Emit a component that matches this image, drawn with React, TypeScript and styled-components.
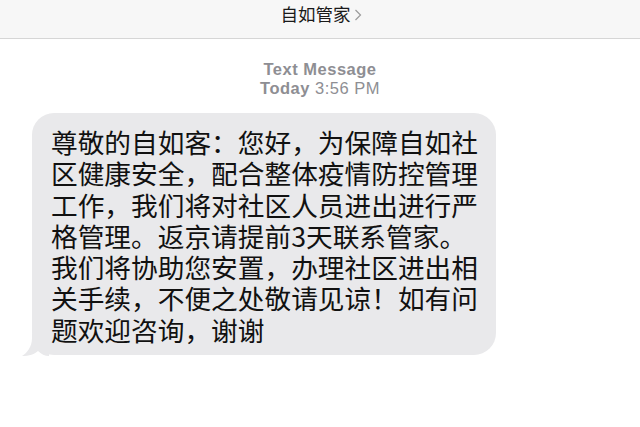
import React from "react";
import styled, { createGlobalStyle } from "styled-components";

const Global = createGlobalStyle`
  html, body { margin: 0; padding: 0; background: #ffffff; }
  body { width: 640px; height: 427px; overflow: hidden; }
`;

const Page = styled.div`
  width: 640px;
  height: 427px;
  display: flex;
  flex-direction: column;
  background: #ffffff;
  font-family: "Liberation Sans", "Noto Sans CJK SC", sans-serif;
`;

const NavBar = styled.header`
  height: 38px;
  background: #f7f7f7;
  border-bottom: 1px solid #d6d6d6;
  display: flex;
  align-items: center;
  justify-content: center;
  gap: 3px;
  box-sizing: content-box;
  padding-left: 2px;
`;

const Title = styled.span`
  font-family: "Noto Sans CJK SC", sans-serif;
  font-size: 17.5px;
  line-height: 20px;
  color: #1a1a1a;
  margin-top: -10px;
`;

const Chevron = styled.svg`
  width: 8px;
  height: 12px;
  margin-top: -8px;
`;

const Meta = styled.div`
  padding-top: 21px;
  display: flex;
  flex-direction: column;
  align-items: center;
  color: #8e8e93;
  font-size: 16.5px;
  line-height: 19px;
  letter-spacing: 0.5px;
`;

const MetaStrong = styled.span<{ $light?: boolean }>`
  font-weight: ${(p) => (p.$light ? 400 : 700)};
`;

const Thread = styled.div`
  padding: 15px 0 0 32px;
  display: flex;
  flex-direction: column;
  align-items: flex-start;
`;

const Bubble = styled.div`
  position: relative;
  background: #e9e9eb;
  border-radius: 22px;
  padding: 13px 18px 10px 19px;
  color: #111111;
  font-family: "Noto Sans CJK SC", sans-serif;
  font-size: 26.7px;
  line-height: 31.3px;
`;

const Line = styled.div`
  white-space: nowrap;
`;

const Tail = styled.svg`
  position: absolute;
  left: -11px;
  bottom: -1px;
  width: 30px;
  height: 22px;
`;

const lines = [
  "尊敬的自如客：您好，为保障自如社",
  "区健康安全，配合整体疫情防控管理",
  "工作，我们将对社区人员进出进行严",
  "格管理。返京请提前3天联系管家。",
  "我们将协助您安置，办理社区进出相",
  "关手续，不便之处敬请见谅！如有问",
  "题欢迎咨询，谢谢",
];

export default function App() {
  return (
    <>
      <Global />
      <Page>
        <NavBar>
          <Title>自如管家</Title>
          <Chevron viewBox="0 0 8 12">
            <path d="M1.5 1 L6.5 6 L1.5 11" fill="none" stroke="#9b9b9b" strokeWidth="1.2" />
          </Chevron>
        </NavBar>
        <Meta>
          <MetaStrong>Text Message</MetaStrong>
          <span>
            <MetaStrong>Today</MetaStrong> <MetaStrong $light>3:56 PM</MetaStrong>
          </span>
        </Meta>
        <Thread>
          <Bubble>
            <Tail viewBox="0 0 30 22">
              <path
                d="M11 0 L28 0 L28 22 C24 22 20 20 17 17 C14 20 8 22 1 22 C6 19 11 13 11 4 Z"
                fill="#e9e9eb"
              />
            </Tail>
            {lines.map((l) => (
              <Line key={l}>{l}</Line>
            ))}
          </Bubble>
        </Thread>
      </Page>
    </>
  );
}
